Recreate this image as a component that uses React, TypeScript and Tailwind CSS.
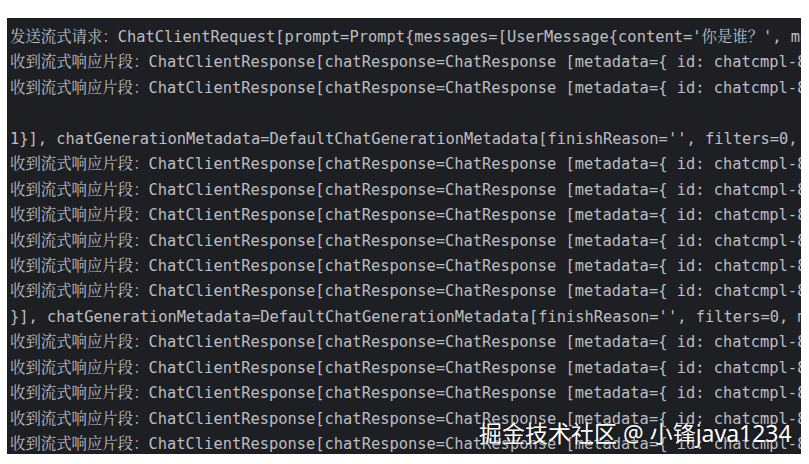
import React from "react";

const RESP = "收到流式响应片段：ChatClientResponse[chatResponse=ChatResponse [metadata={ id: chatcmpl-8xYz, usage: { promptTokens: 12 } }]";

const lines: string[] = [
  "发送流式请求：ChatClientRequest[prompt=Prompt{messages=[UserMessage{content='你是谁？', metadata={messageType=USER}}]}]",
  RESP,
  RESP,
  "",
  "1}], chatGenerationMetadata=DefaultChatGenerationMetadata[finishReason='', filters=0, metadata=0]]",
  RESP,
  RESP,
  RESP,
  RESP,
  RESP,
  RESP,
  "}], chatGenerationMetadata=DefaultChatGenerationMetadata[finishReason='', filters=0, metadata=0]]",
  RESP,
  RESP,
  RESP,
  RESP,
  RESP,
];

export default function App() {
  return (
    <div className="w-[809px] h-[464px] bg-white pt-[18px] pl-[7px] pr-[8px] pb-[10px] overflow-hidden">
      <div className="relative h-full w-full bg-[#1e1f22] overflow-hidden pt-[7px] pl-[3px]">
        {lines.map((l, i) => (
          <div
            key={i}
            className="whitespace-pre h-[25.44px] leading-[25.44px] text-[15.4px] text-[#bcbec4]"
            style={{ fontFamily: '"DejaVu Sans Mono", "Noto Serif CJK SC", "Noto Sans CJK SC", monospace' }}
          >
            {l}
          </div>
        ))}
        <div
          className="absolute left-[472px] top-[402px] whitespace-pre text-[23px] leading-[26px] text-white [text-shadow:0_0_3px_rgba(0,0,0,0.6)]"
          style={{ fontFamily: '"Noto Sans", "Noto Sans CJK SC", sans-serif' }}
        >
          掘金技术社区 @ 小锋java1234
        </div>
      </div>
    </div>
  );
}
